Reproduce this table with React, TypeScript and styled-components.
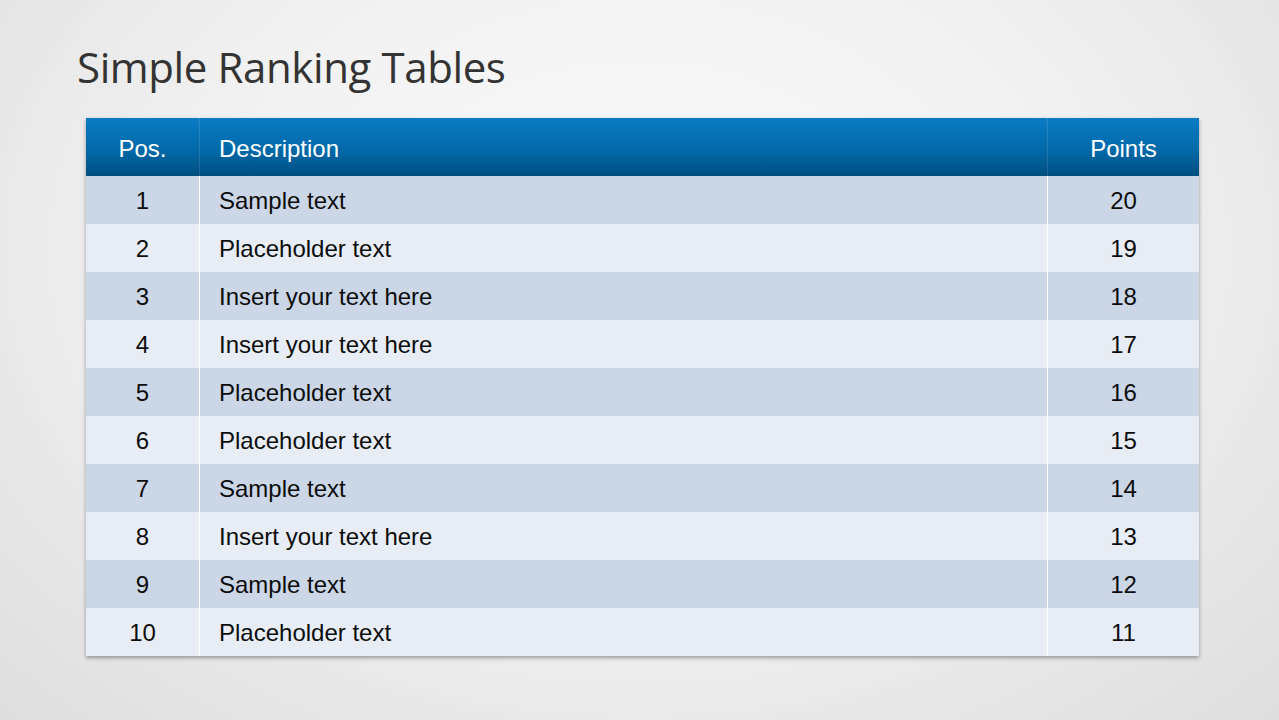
import styled, { createGlobalStyle } from "styled-components";

const GlobalStyle = createGlobalStyle`
  html, body {
    margin: 0;
    padding: 0;
  }
  body {
    font-family: "Liberation Sans", Arial, sans-serif;
  }
`;

const Slide = styled.div`
  width: 1279px;
  height: 720px;
  box-sizing: border-box;
  padding: 42px 80px 0 86px;
  background: radial-gradient(ellipse at 50% 35%, #fbfbfb 0%, #f1f1f1 50%, #dedede 100%);
  overflow: hidden;
`;

const Title = styled.h1`
  margin: 0 0 0 -9px;
  font-family: "Open Sans", sans-serif;
  font-weight: 400;
  font-size: 42px;
  line-height: 50px;
  color: #333333;
  letter-spacing: -0.4px;
`;

const Table = styled.div`
  margin-top: 26px;
  width: 1113px;
  box-shadow: 0 2px 4px rgba(0, 0, 0, 0.35);
`;

const Row = styled.div<{ $shade?: "head" | "dark" | "light" }>`
  display: grid;
  grid-template-columns: 113px 1fr 152px;
  height: ${(p) => (p.$shade === "head" ? "58px" : "48px")};
  background: ${(p) =>
    p.$shade === "head"
      ? "linear-gradient(#0a7bc4, #0269a8 55%, #004f80)"
      : p.$shade === "dark"
      ? "#cbd7e6"
      : "#e8edf5"};
  color: ${(p) => (p.$shade === "head" ? "#ffffff" : "#0d0d0d")};
`;

const Cell = styled.div<{ $align?: "left" | "center"; $head?: boolean }>`
  display: flex;
  align-items: center;
  justify-content: ${(p) => (p.$align === "left" ? "flex-start" : "center")};
  padding-left: ${(p) => (p.$align === "left" ? "19px" : "0")};
  padding-top: ${(p) => (p.$head ? "4px" : "2px")};
  box-sizing: border-box;
  font-size: 24px;
  border-left: 1px solid ${(p) => (p.$head ? "rgba(255,255,255,0.12)" : "#ffffff")};
  &:first-child {
    border-left: none;
  }
`;

const rows = [
  ["1", "Sample text", "20"],
  ["2", "Placeholder text", "19"],
  ["3", "Insert your text here", "18"],
  ["4", "Insert your text here", "17"],
  ["5", "Placeholder text", "16"],
  ["6", "Placeholder text", "15"],
  ["7", "Sample text", "14"],
  ["8", "Insert your text here", "13"],
  ["9", "Sample text", "12"],
  ["10", "Placeholder text", "11"],
];

const App = () => {
  return (
    <Slide>
      <GlobalStyle />
      <Title>Simple Ranking Tables</Title>
      <Table>
        <Row $shade="head">
          <Cell $head>Pos.</Cell>
          <Cell $head $align="left">Description</Cell>
          <Cell $head>Points</Cell>
        </Row>
        {rows.map((r, i) => (
          <Row key={r[0]} $shade={i % 2 === 0 ? "dark" : "light"}>
            <Cell>{r[0]}</Cell>
            <Cell $align="left">{r[1]}</Cell>
            <Cell>{r[2]}</Cell>
          </Row>
        ))}
      </Table>
    </Slide>
  );
};

export default App;
